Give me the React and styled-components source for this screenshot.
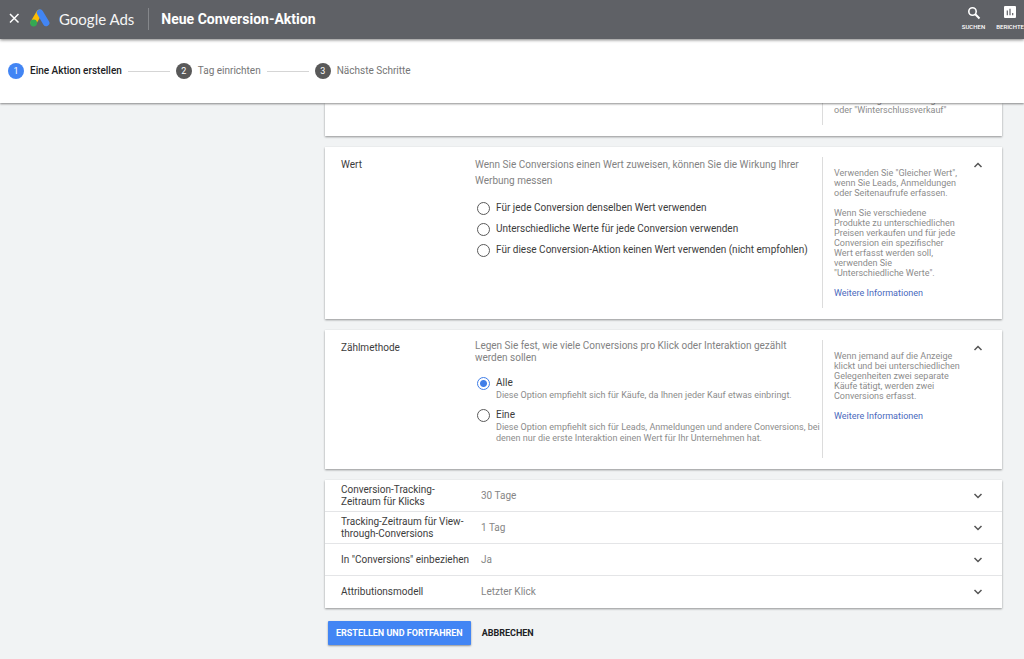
import React, { useState } from "react";
import styled, { createGlobalStyle } from "styled-components";

/* ---------------- GLOBAL ---------------- */
const GlobalStyle = createGlobalStyle`
  *, *::before, *::after {
    box-sizing: border-box;
  }

  html, body, #root {
    height: 100%;
  }

  body {
    margin: 0;
    background: #f1f3f4;
    color: #3c3c3c;
    font-family: Roboto, "Liberation Sans", sans-serif;
    font-size: 10px;
    line-height: 12px;
  }
`;

/* ---------------- STYLES ---------------- */
const Page = styled.div`
  height: 100%;
  display: flex;
  flex-direction: column;
  overflow: hidden;
`;

const TopBar = styled.header`
  flex: none;
  z-index: 2;
  height: 39px;
  padding: 0 0 2px 8px;
  display: flex;
  align-items: center;
  background: #5f6166;
  color: #ffffff;
  box-shadow: 0 1px 3px rgba(0, 0, 0, 0.5);
`;

const IconButton = styled.button`
  flex: none;
  display: flex;
  padding: 0;
  border: none;
  background: none;
  color: inherit;
  cursor: pointer;
`;

const Brand = styled.div`
  display: flex;
  align-items: center;
  gap: 9px;
  margin-left: 10px;
  padding-right: 14px;
  border-right: 1px solid #85878b;
  height: 22px;
  font-family: Lato, Roboto, sans-serif;
  font-size: 15px;
  color: #f5f5f5;
`;

const Title = styled.h1`
  margin: 0 auto 0 12px;
  font-size: 14px;
  font-weight: 700;
`;

const Tools = styled.nav`
  display: flex;
  gap: 11px;
`;

const Tool = styled.button`
  display: flex;
  flex-direction: column;
  align-items: center;
  gap: 3px;
  padding: 0;
  border: none;
  background: none;
  color: #ffffff;
  font: 500 6px/8px Roboto, sans-serif;
  cursor: pointer;
`;

const Steps = styled.ol`
  flex: none;
  z-index: 1;
  height: 64px;
  margin: 0;
  padding: 0 8px;
  display: flex;
  align-items: center;
  list-style: none;
  background: #ffffff;
  box-shadow: 0 1px 2px rgba(0, 0, 0, 0.45);
`;

const Step = styled.li`
  display: flex;
  align-items: center;
  gap: 6px;
  color: ${({ $active }) => ($active ? "#202124" : "#757575")};
  font-weight: ${({ $active }) => ($active ? 500 : 400)};

  &:not(:first-child)::before {
    content: "";
    width: 42px;
    height: 1px;
    margin-left: 6px;
    background: #d5d5d5;
  }
`;

const StepNumber = styled.span`
  width: 16px;
  height: 16px;
  border-radius: 50%;
  background: ${({ $active }) => ($active ? "#4285f4" : "#595959")};
  color: #ffffff;
  font-size: 9px;
  font-weight: 400;
  line-height: 16px;
  text-align: center;
`;

const Content = styled.main`
  flex: 1;
  min-height: 0;
  overflow: hidden;
  padding: 0 22px 0 325px;
  display: flex;
  flex-direction: column;
  gap: 11px;
`;

const Card = styled.section`
  flex: none;
  background: #ffffff;
  box-shadow: 0 1px 2px rgba(0, 0, 0, 0.4);
`;

const Panel = styled(Card)`
  display: grid;
  grid-template-columns: 134px minmax(0, 1fr) 140px 32px;
  padding: 10px 8px 11px 16px;
  min-height: ${({ $height }) => $height};
`;

const PanelTitle = styled.h2`
  margin: 0;
  padding-top: 2px;
  font-size: 10px;
  font-weight: 400;
  line-height: 12px;
`;

const Intro = styled.p`
  margin: 0;
  padding-right: 16px;
  color: #828282;
  line-height: ${({ $loose }) => ($loose ? "16px" : "12px")};
`;

const Options = styled.div`
  display: flex;
  flex-direction: column;
  gap: 7px;
  margin: 12px 0 0 2px;
`;

const Option = styled.label`
  display: grid;
  grid-template-columns: 13px 1fr;
  column-gap: 6px;
  align-items: center;
  line-height: 14px;
  cursor: pointer;
`;

const Radio = styled.input`
  appearance: none;
  width: 13px;
  height: 13px;
  margin: 0;
  border: 1px solid #5a5a5a;
  border-radius: 50%;

  &:checked {
    border-color: #3f7ee8;
    background: radial-gradient(circle, #3f7ee8 3px, transparent 4px);
  }
`;

const OptionHint = styled.span`
  grid-column: 2;
  color: #8c8c8c;
  font-size: 9px;
  line-height: 11px;
`;

const Help = styled.aside`
  display: flex;
  flex-direction: column;
  gap: 10px;
  padding: 11px 0 0 11px;
  border-left: 1px solid #dcdcdc;
  color: #8c8c8c;
  font-size: 9px;
  line-height: 10px;

  p {
    margin: 0;
  }
`;

const HelpLink = styled.a`
  color: #4a69bd;
  text-decoration: none;
`;

const Toggle = styled(IconButton)`
  align-self: start;
  justify-self: center;
  padding: 2px;
`;

const PreviousPanel = styled(Panel)`
  padding-top: 0;

  ${Help} {
    grid-column: 3;
    height: 22px;
    padding-top: 0;
    padding-bottom: 10px;
    justify-content: flex-end;
  }
`;

const SummaryRow = styled.button`
  width: 100%;
  height: 32px;
  padding: 0 18px 0 16px;
  display: grid;
  grid-template-columns: 130px 1fr 12px;
  column-gap: 10px;
  align-items: center;
  border: none;
  border-bottom: 1px solid #e4e5e7;
  background: none;
  color: inherit;
  font: inherit;
  text-align: left;
  cursor: pointer;

  &:last-child {
    border-bottom: none;
  }
`;

const SummaryValue = styled.span`
  color: #868686;
`;

const Actions = styled.div`
  display: flex;
  gap: 11px;
  padding: 2px 3px;
`;

const ActionButton = styled.button`
  height: 24px;
  padding: 0 ${({ $primary }) => ($primary ? "8px" : "0")};
  border: none;
  border-radius: 1px;
  background: ${({ $primary }) => ($primary ? "#4285f4" : "none")};
  box-shadow: ${({ $primary }) => ($primary ? "0 1px 2px rgba(0, 0, 0, 0.4)" : "none")};
  color: ${({ $primary }) => ($primary ? "#ffffff" : "#202124")};
  font: 700 9px/12px Roboto, sans-serif;
  cursor: pointer;
`;

/* ---------------- ICONS ---------------- */
const Chevron = ({ up }) => (
  <svg width="12" height="12" viewBox="0 0 12 12" fill="none" stroke="#555555" strokeWidth="1.5">
    <path d={up ? "M2.5 8L6 4.5L9.5 8" : "M2.5 4L6 7.5L9.5 4"} />
  </svg>
);

const CloseIcon = () => (
  <svg width="12" height="12" viewBox="0 0 12 12" stroke="currentColor" strokeWidth="1.5">
    <path d="M2 1L10.5 9.5M10.5 1L2 9.5" />
  </svg>
);

const AdsLogo = () => (
  <svg width="20" height="20" viewBox="0 0 20 20">
    <path d="M9.4 3.6L3.6 13.6" stroke="#fbbc04" strokeWidth="6" strokeLinecap="round" />
    <circle cx="3.6" cy="14" r="3.4" fill="#34a853" />
    <path d="M10 3.6L16.2 14" stroke="#4285f4" strokeWidth="6.4" strokeLinecap="round" />
  </svg>
);

const SearchIcon = () => (
  <svg width="14" height="14" viewBox="0 0 14 14" fill="none" stroke="currentColor">
    <circle cx="5.5" cy="5.5" r="3.7" strokeWidth="1.6" />
    <path d="M8.3 8.3L12.5 12.5" strokeWidth="2" />
  </svg>
);

const ReportIcon = () => (
  <svg width="14" height="14" viewBox="0 0 14 14">
    <rect x="1" y="0" width="12" height="12" rx="1" fill="currentColor" />
    <path d="M4.3 4.5V9.3M7 2.7V9.3M9.7 7V9.3" stroke="#5f6166" strokeWidth="1.2" />
  </svg>
);

/* ---------------- DATA ---------------- */
const steps = ["Eine Aktion erstellen", "Tag einrichten", "Nächste Schritte"];

const valueOptions = [
  "Für jede Conversion denselben Wert verwenden",
  "Unterschiedliche Werte für jede Conversion verwenden",
  "Für diese Conversion-Aktion keinen Wert verwenden (nicht empfohlen)",
];

const countOptions = [
  { label: "Alle", hint: "Diese Option empfiehlt sich für Käufe, da Ihnen jeder Kauf etwas einbringt." },
  {
    label: "Eine",
    hint: "Diese Option empfiehlt sich für Leads, Anmeldungen und andere Conversions, bei denen nur die erste Interaktion einen Wert für Ihr Unternehmen hat.",
  },
];

const summary = [
  ["Conversion-Tracking-Zeitraum für Klicks", "30 Tage"],
  ["Tracking-Zeitraum für View-through-Conversions", "1 Tag"],
  ['In "Conversions" einbeziehen', "Ja"],
  ["Attributionsmodell", "Letzter Klick"],
];

/* ---------------- COMPONENT ---------------- */
export default function App() {
  const [value, setValue] = useState("");
  const [count, setCount] = useState("Alle");

  return (
    <>
      <GlobalStyle />
      <Page>
        <TopBar>
          <IconButton aria-label="Schließen">
            <CloseIcon />
          </IconButton>
          <Brand>
            <AdsLogo />
            Google Ads
          </Brand>
          <Title>Neue Conversion-Aktion</Title>
          <Tools>
            <Tool>
              <SearchIcon />
              SUCHEN
            </Tool>
            <Tool>
              <ReportIcon />
              BERICHTE
            </Tool>
          </Tools>
        </TopBar>

        <Steps>
          {steps.map((step, i) => (
            <Step key={step} $active={i === 0}>
              <StepNumber $active={i === 0}>{i + 1}</StepNumber>
              {step}
            </Step>
          ))}
        </Steps>

        <Content>
          <PreviousPanel>
            <Help>
              <p>
                "Bewerbungen als Manager"
                <br />
                oder "Winterschlussverkauf"
              </p>
            </Help>
          </PreviousPanel>

          <Panel $height="172px">
            <PanelTitle>Wert</PanelTitle>
            <div>
              <Intro $loose>
                Wenn Sie Conversions einen Wert zuweisen, können Sie die Wirkung Ihrer Werbung messen
              </Intro>
              <Options>
                {valueOptions.map((label) => (
                  <Option key={label}>
                    <Radio
                      type="radio"
                      name="value"
                      checked={value === label}
                      onChange={() => setValue(label)}
                    />
                    {label}
                  </Option>
                ))}
              </Options>
            </div>
            <Help>
              <p>Verwenden Sie "Gleicher Wert", wenn Sie Leads, Anmeldungen oder Seitenaufrufe erfassen.</p>
              <p>
                Wenn Sie verschiedene Produkte zu unterschiedlichen Preisen verkaufen und für jede
                Conversion ein spezifischer Wert erfasst werden soll, verwenden Sie
                "Unterschiedliche Werte".
              </p>
              <HelpLink href="#wert">Weitere Informationen</HelpLink>
            </Help>
            <Toggle aria-label="Wert einklappen">
              <Chevron up />
            </Toggle>
          </Panel>

          <Panel $height="139px">
            <PanelTitle>Zählmethode</PanelTitle>
            <div>
              <Intro>
                Legen Sie fest, wie viele Conversions pro Klick oder Interaktion gezählt werden sollen
              </Intro>
              <Options>
                {countOptions.map(({ label, hint }) => (
                  <Option key={label}>
                    <Radio
                      type="radio"
                      name="count"
                      checked={count === label}
                      onChange={() => setCount(label)}
                    />
                    {label}
                    <OptionHint>{hint}</OptionHint>
                  </Option>
                ))}
              </Options>
            </div>
            <Help>
              <p>
                Wenn jemand auf die Anzeige klickt und bei unterschiedlichen Gelegenheiten zwei
                separate Käufe tätigt, werden zwei Conversions erfasst.
              </p>
              <HelpLink href="#zaehlmethode">Weitere Informationen</HelpLink>
            </Help>
            <Toggle aria-label="Zählmethode einklappen">
              <Chevron up />
            </Toggle>
          </Panel>

          <Card>
            {summary.map(([label, text]) => (
              <SummaryRow key={label}>
                <span>{label}</span>
                <SummaryValue>{text}</SummaryValue>
                <Chevron />
              </SummaryRow>
            ))}
          </Card>

          <Actions>
            <ActionButton $primary>ERSTELLEN UND FORTFAHREN</ActionButton>
            <ActionButton>ABBRECHEN</ActionButton>
          </Actions>
        </Content>
      </Page>
    </>
  );
}
